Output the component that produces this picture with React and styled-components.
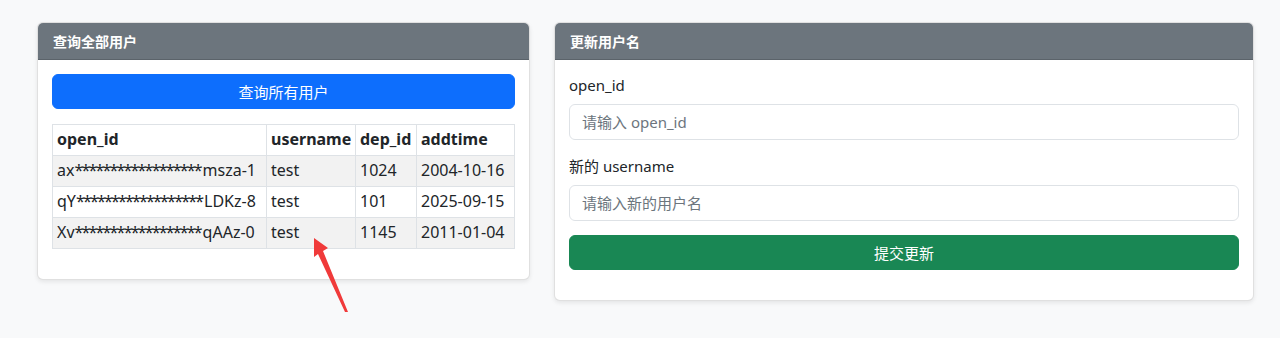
import React from "react";
import styled, { createGlobalStyle } from "styled-components";

const GlobalStyle = createGlobalStyle`
  * { box-sizing: border-box; }
  body {
    margin: 0;
    background: #f8f9fa;
    font-family: "Noto Sans", "Noto Sans CJK SC", sans-serif;
    color: #212529;
    font-size: 16px;
  }
`;

const Page = styled.div`
  position: relative;
  height: 338px;
  display: grid;
  grid-template-columns: 493px 700px;
  gap: 24px;
  align-items: start;
  padding: 22px 27px 0 37px;
`;

const Card = styled.div`
  background: #fff;
  border: 1px solid rgba(0, 0, 0, 0.12);
  border-radius: 6px;
  box-shadow: 0 2px 4px rgba(0, 0, 0, 0.08);
  overflow: hidden;
`;

const CardHeader = styled.div`
  background: #6c757d;
  color: #fff;
  font-weight: 700;
  font-size: 14px;
  line-height: 21px;
  padding: 8px 15px 7px;
  border-bottom: 1px solid rgba(0, 0, 0, 0.15);
`;

const CardBody = styled.div`
  padding: 14px;
`;

const Button = styled.button`
  display: block;
  width: 100%;
  height: ${(p) => p.$h || 36}px;
  border: 1px solid ${(p) => p.$color};
  background: ${(p) => p.$color};
  color: #fff;
  border-radius: 6px;
  font-family: inherit;
  font-size: 15px;
  cursor: pointer;
  margin-bottom: ${(p) => p.$mb || 0}px;
`;

const Table = styled.table`
  width: 100%;
  table-layout: fixed;
  border-collapse: collapse;
  font-size: 16px;
  margin-bottom: 16px;
  th, td {
    border: 1px solid #dee2e6;
    padding: 3px 4px 4px;
    text-align: left;
    line-height: 23px;
    white-space: nowrap;
    overflow: hidden;
  }
  th { font-weight: 700; background: #fff; }
  tbody tr:nth-child(odd) td { background: #f2f2f2; }
  tbody tr:nth-child(even) td { background: #fff; }
`;

const Mask = styled.span`
  letter-spacing: -1.8px;
  margin-right: 1.8px;
`;

const Label = styled.label`
  display: block;
  font-size: 15px;
  line-height: 22px;
  margin-bottom: 8px;
`;

const Input = styled.input`
  display: block;
  width: 100%;
  height: 36px;
  border: 1px solid #dee2e6;
  border-radius: 6px;
  padding: 0 12px;
  font-family: inherit;
  font-size: 15px;
  margin-bottom: ${(p) => p.$mb}px;
  &::placeholder { color: #6c757d; }
`;

const Arrow = styled.svg`
  position: absolute;
  left: 308px;
  top: 234px;
  pointer-events: none;
`;

const rows = [
  ["ax", "msza-1", "test", "1024", "2004-10-16"],
  ["qY", "LDKz-8", "test", "101", "2025-09-15"],
  ["Xv", "qAAz-0", "test", "1145", "2011-01-04"],
];

export default function App() {
  return (
    <>
      <GlobalStyle />
      <Page>
        <Card>
          <CardHeader>查询全部用户</CardHeader>
          <CardBody>
            <Button $color="#0d6efd" $h={35} $mb={15}>查询所有用户</Button>
            <Table>
              <colgroup>
                <col style={{ width: 214 }} />
                <col style={{ width: 89 }} />
                <col style={{ width: 61 }} />
                <col />
              </colgroup>
              <thead>
                <tr>
                  <th>open_id</th>
                  <th>username</th>
                  <th>dep_id</th>
                  <th>addtime</th>
                </tr>
              </thead>
              <tbody>
                {rows.map((r) => (
                  <tr key={r[0]}>
                    <td>
                      {r[0]}
                      <Mask>{"*".repeat(18)}</Mask>
                      {r[1]}
                    </td>
                    <td>{r[2]}</td>
                    <td>{r[3]}</td>
                    <td>{r[4]}</td>
                  </tr>
                ))}
              </tbody>
            </Table>
          </CardBody>
        </Card>
        <Card>
          <CardHeader>更新用户名</CardHeader>
          <CardBody>
            <Label>open_id</Label>
            <Input placeholder="请输入 open_id" $mb={15} />
            <Label>新的 username</Label>
            <Input placeholder="请输入新的用户名" $mb={14} />
            <Button $color="#198754" $h={35} $mb={16}>提交更新</Button>
          </CardBody>
        </Card>
        <Arrow width="50" height="82" viewBox="0 0 50 82">
          <polygon
            points="6,4 20,14 15,17 40,78 37,78 10,20 6,23"
            fill="#f03a3a"
          />
        </Arrow>
      </Page>
    </>
  );
}
